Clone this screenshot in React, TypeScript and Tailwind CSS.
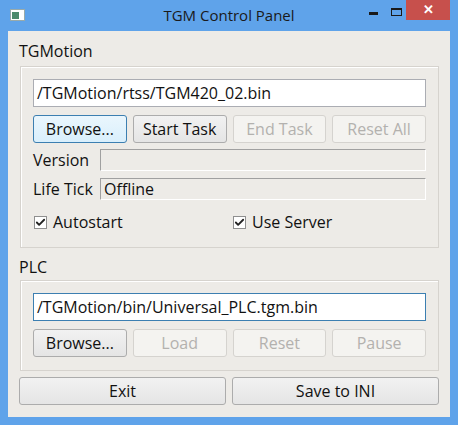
import { Check } from 'lucide-react'

const font = { fontFamily: '"Open Sans", "Noto Sans", sans-serif' }

function Btn({ label, disabled, focused }: { label: string; disabled?: boolean; focused?: boolean }) {
  return (
    <div
      className={`h-[28px] rounded-[3px] border flex items-center justify-center text-[16px] ${
        focused
          ? 'border-[#3c7fb1] bg-gradient-to-b from-[#eaf6fd] to-[#d9effc] text-[#111]'
          : disabled
            ? 'border-[#d5d3cf] bg-[#f4f3f0] text-[#b3b1ae]'
            : 'border-[#acacac] bg-gradient-to-b from-[#f2f2f2] to-[#e5e5e5] text-[#111]'
      }`}
    >
      {label}
    </div>
  )
}

function Field({ value }: { value?: string }) {
  return (
    <div className="flex-1 h-[22px] border-t border-l border-[#a0a0a0] border-b border-r border-b-white border-r-white bg-[#edebe7] flex items-center px-[3px] text-[16px] text-[#111]">
      {value}
    </div>
  )
}

function CheckBox({ label }: { label: string }) {
  return (
    <div className="flex items-center gap-[6px] text-[16px] text-[#111]">
      <div className="w-[13px] h-[13px] border border-[#8f8f8f] bg-white flex items-center justify-center">
        <Check size={11} strokeWidth={4} className="text-[#222]" />
      </div>
      {label}
    </div>
  )
}

export default function App() {
  return (
    <div className="w-[458px] h-[425px] bg-[#5fa3ea] flex flex-col" style={font}>
      {/* title bar */}
      <div className="h-[31px] relative flex items-center justify-center">
        <div className="absolute left-[10px] top-[9px] w-[15px] h-[12px] bg-white border border-[#9aa] flex items-center px-[1px]">
          <div className="w-[7px] h-[7px] bg-[#4c8a6c]" />
        </div>
        <span className="text-[15px] text-[#1a1a1a] -mt-[1px]">TGM Control Panel</span>
        <div className="absolute right-[80px] top-[12px] w-[9px] h-[3px] bg-[#1a1a1a]" />
        <div className="absolute right-[56px] top-[8px] w-[11px] h-[8px] border border-[#1a1a1a] border-t-2" />
        <div className="absolute right-[8px] top-0 w-[44px] h-[20px] bg-[#c7504c] flex items-center justify-center text-white text-[13px] font-bold">
          ✕
        </div>
      </div>

      {/* client */}
      <div className="mx-[8px] mb-[8px] flex-1 bg-[#edebe7] text-[#111] px-[11px]">
        <div className="h-[35px] flex items-center text-[16px] pt-[4px]">TGMotion</div>
        <div className="ml-[1px] border border-[#d6d3ce] shadow-[inset_1px_1px_0_#ffffff] px-[12px] pt-[12px] pb-[13px]">
          <div className="h-[28px] border border-[#abadb3] bg-white flex items-center px-[3px] text-[16px]">
            /TGMotion/rtss/TGM420_02.bin
          </div>
          <div className="grid grid-cols-4 gap-[6px] mt-[8px]">
            <Btn label="Browse..." focused />
            <Btn label="Start Task" />
            <Btn label="End Task" disabled />
            <Btn label="Reset All" disabled />
          </div>
          <div className="flex items-center mt-[6px] text-[16px] leading-[22px]">
            <span className="w-[67px]">Version</span>
            <Field />
          </div>
          <div className="flex items-center mt-[7px] text-[16px] leading-[22px]">
            <span className="w-[67px]">Life Tick</span>
            <Field value="Offline" />
          </div>
          <div className="grid grid-cols-2 gap-[6px] mt-[10px] pl-[1px]">
            <CheckBox label="Autostart" />
            <CheckBox label="Use Server" />
          </div>
        </div>

        <div className="h-[32px] flex items-center text-[16px] pt-[6px]">PLC</div>
        <div className="ml-[1px] border border-[#d6d3ce] shadow-[inset_1px_1px_0_#ffffff] px-[12px] pt-[12px] pb-[13px]">
          <div className="h-[28px] border border-[#3c7fb1] bg-white flex items-center px-[3px] text-[16px]">
            /TGMotion/bin/Universal_PLC.tgm.bin
          </div>
          <div className="grid grid-cols-4 gap-[6px] mt-[8px]">
            <Btn label="Browse..." />
            <Btn label="Load" disabled />
            <Btn label="Reset" disabled />
            <Btn label="Pause" disabled />
          </div>
        </div>

        <div className="grid grid-cols-2 gap-[6px] mt-[6px]">
          <Btn label="Exit" />
          <Btn label="Save to INI" />
        </div>
      </div>
    </div>
  )
}
